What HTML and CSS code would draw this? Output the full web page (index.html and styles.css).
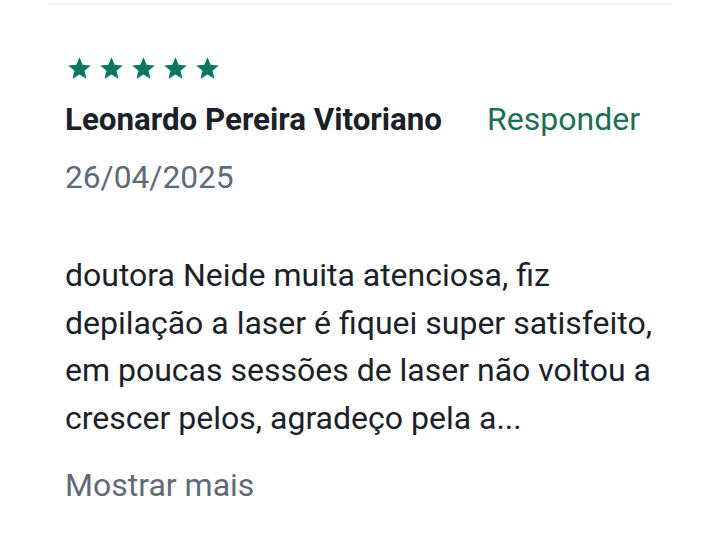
FILE: index.html
```html
<!DOCTYPE html>
<html lang="pt-BR">
<head>
  <meta charset="UTF-8" />
  <meta name="viewport" content="width=device-width, initial-scale=1.0" />
  <title>Avaliação</title>
  <link rel="stylesheet" href="styles.css">
</head>
<body>
  <div class="review-list">
    <div class="review">
      <div class="stars">
        <svg viewBox="0 0 24 24"><path d="M12 17.27L18.18 21l-1.64-7.03L22 9.24l-7.19-.61L12 2 9.19 8.63 2 9.24l5.46 4.73L5.82 21z"/></svg>
        <svg viewBox="0 0 24 24"><path d="M12 17.27L18.18 21l-1.64-7.03L22 9.24l-7.19-.61L12 2 9.19 8.63 2 9.24l5.46 4.73L5.82 21z"/></svg>
        <svg viewBox="0 0 24 24"><path d="M12 17.27L18.18 21l-1.64-7.03L22 9.24l-7.19-.61L12 2 9.19 8.63 2 9.24l5.46 4.73L5.82 21z"/></svg>
        <svg viewBox="0 0 24 24"><path d="M12 17.27L18.18 21l-1.64-7.03L22 9.24l-7.19-.61L12 2 9.19 8.63 2 9.24l5.46 4.73L5.82 21z"/></svg>
        <svg viewBox="0 0 24 24"><path d="M12 17.27L18.18 21l-1.64-7.03L22 9.24l-7.19-.61L12 2 9.19 8.63 2 9.24l5.46 4.73L5.82 21z"/></svg>
      </div>
      <div class="review-head">
        <span class="author">Leonardo Pereira Vitoriano</span>
        <a class="reply" href="#">Responder</a>
      </div>
      <div class="date">26/04/2025</div>
      <p class="text">doutora Neide muita atenciosa, fiz depilação a laser é fiquei super satisfeito, em poucas sessões de laser não voltou a crescer pelos, agradeço pela a...</p>
      <a class="more" href="#">Mostrar mais</a>
    </div>
  </div>
</body>
</html>
```

FILE: styles.css
```css
body {
  font-family: Roboto, "Noto Sans", sans-serif;
  background: #fff;
  margin: 0;
  padding: 0;
}
.review-list {
  margin: 0 48px;
  padding-top: 3px;
}
.review {
  border-top: 2px solid #f2f3f4;
  padding: 50px 17px 0;
}
.stars {
  display: flex;
  gap: 5px;
  margin-left: 1px;
}
.stars svg {
  width: 27px;
  height: 27px;
  fill: #0a785b;
}
.review-head {
  display: flex;
  justify-content: space-between;
  align-items: baseline;
  margin-top: 17px;
  padding-right: 15px;
  line-height: 40px;
}
.author {
  font-size: 31.3px;
  font-weight: 700;
  color: #1b2128;
}
.reply {
  font-size: 32px;
  color: #1d6e55;
  text-decoration: none;
}
.date {
  font-size: 31.7px;
  line-height: 40px;
  color: #5f6a77;
  margin-top: 18px;
}
.text {
  font-size: 32px;
  line-height: 47.7px;
  color: #1b2128;
  margin: 54px 0 0;
}
.more {
  display: block;
  font-size: 32px;
  line-height: 40px;
  color: #5f6a77;
  text-decoration: none;
  margin-top: 22px;
}
```
